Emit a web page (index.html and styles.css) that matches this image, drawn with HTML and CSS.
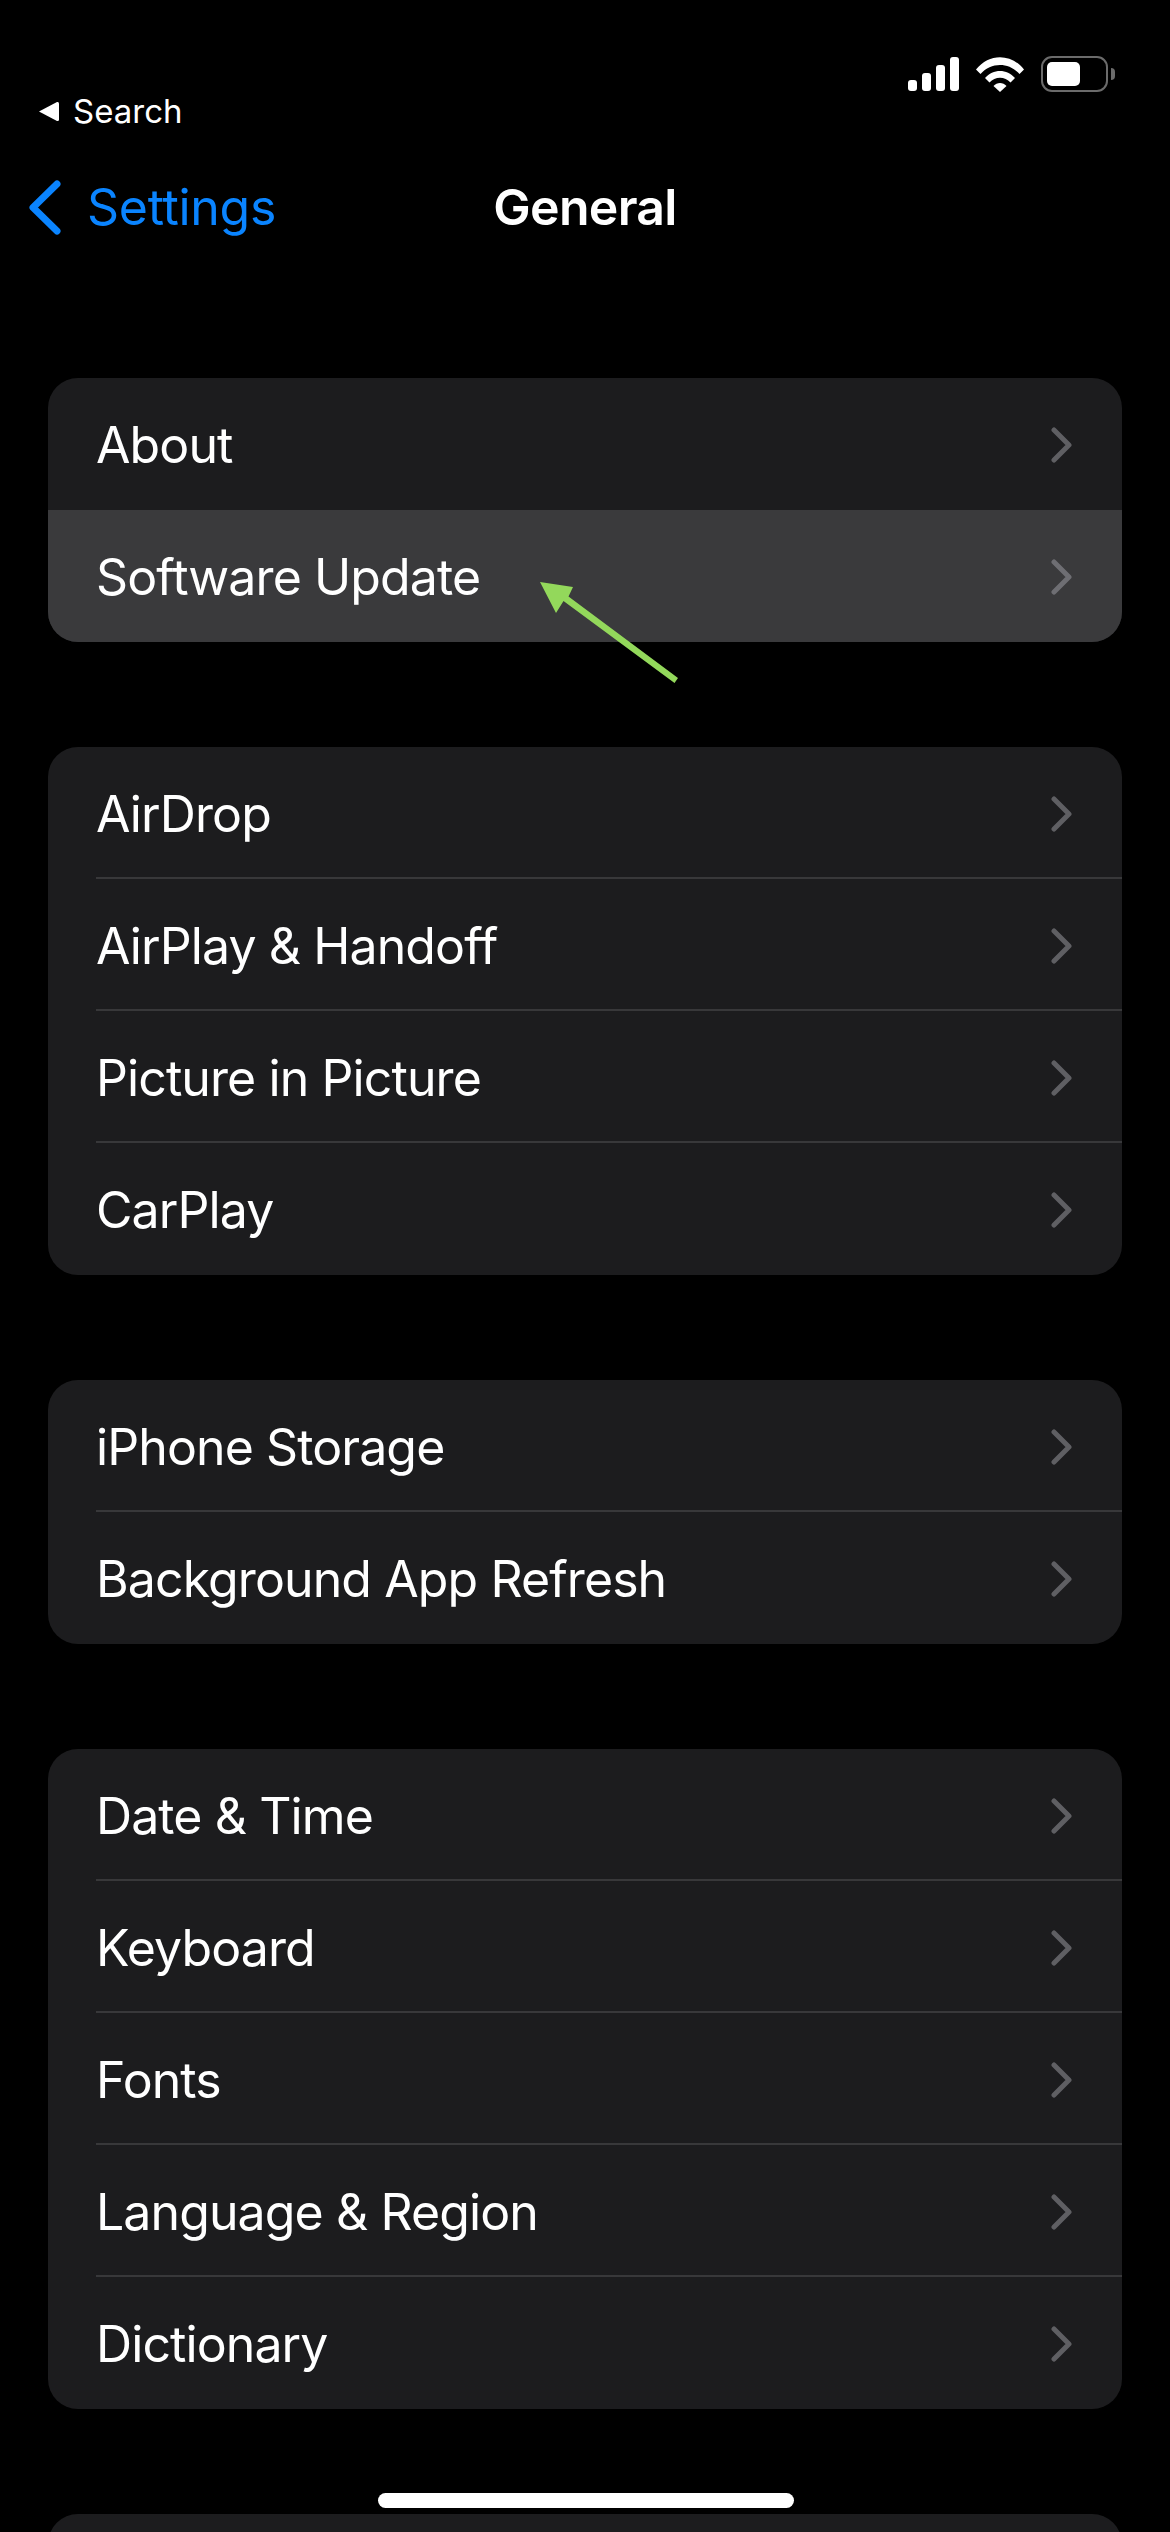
FILE: index.html
```html
<!DOCTYPE html>
<html lang="en">
<head>
    <meta charset="UTF-8">
    <meta name="viewport" content="width=device-width, initial-scale=1.0">
    <title>General</title>
    <link rel="stylesheet" href="styles.css">
</head>

<body>
    <svg class="defs" width="0" height="0">
        <symbol id="chev" viewBox="0 0 21 36">
            <path d="M3 3 L18 18 L3 33" fill="none" stroke="currentColor" stroke-width="5" stroke-linecap="round" stroke-linejoin="round"/>
        </symbol>
    </svg>

    <header class="status-bar">
        <div class="breadcrumb">
            <svg class="breadcrumb-arrow" width="21" height="21" viewBox="0 0 21 21">
                <path d="M1 10.5 L19 1 Q21 0.5 21 2.5 L21 18.5 Q21 20.5 19 20 Z" fill="#fff"/>
            </svg>
            <span>Search</span>
        </div>
        <div class="status-icons">
            <svg width="51" height="34" viewBox="0 0 51 34">
                <rect x="0" y="23" width="9" height="11" rx="3" fill="#fff"/>
                <rect x="14" y="16" width="9" height="18" rx="3" fill="#fff"/>
                <rect x="28" y="8" width="9" height="26" rx="3" fill="#fff"/>
                <rect x="42" y="0" width="9" height="34" rx="3" fill="#fff"/>
            </svg>
            <svg width="48" height="35" viewBox="0 0 48 35">
                <path d="M0 12.5 C13 -4 35 -4 48 12.5 L43.5 17 C33 5 15 5 4.5 17 Z" fill="#fff"/>
                <path d="M9 21 C17 11.5 31 11.5 39 21 L34.5 25.5 C29 19 19 19 13.5 25.5 Z" fill="#fff"/>
                <path d="M17.5 29 C21 25 27 25 30.5 29 L24 35 Z" fill="#fff"/>
            </svg>
            <div class="battery">
                <div class="battery-body"><div class="battery-fill"></div></div>
                <div class="battery-nub"></div>
            </div>
        </div>
    </header>

    <nav class="nav-bar">
        <a class="back-link">
            <svg width="33" height="55" viewBox="0 0 33 55">
                <path d="M29 4 L5 27.5 L29 51" fill="none" stroke="#0a84ff" stroke-width="7" stroke-linecap="round" stroke-linejoin="round"/>
            </svg>
            <span>Settings</span>
        </a>
        <div class="nav-title">General</div>
    </nav>

    <main class="groups">
        <section class="group">
            <div class="row"><span>About</span><svg class="chevron"><use href="#chev"/></svg></div>
            <div class="row row-active"><span>Software Update</span><svg class="chevron"><use href="#chev"/></svg></div>
        </section>
        <section class="group">
            <div class="row"><span>AirDrop</span><svg class="chevron"><use href="#chev"/></svg></div>
            <div class="row"><span>AirPlay &amp; Handoff</span><svg class="chevron"><use href="#chev"/></svg></div>
            <div class="row"><span>Picture in Picture</span><svg class="chevron"><use href="#chev"/></svg></div>
            <div class="row"><span>CarPlay</span><svg class="chevron"><use href="#chev"/></svg></div>
        </section>
        <section class="group">
            <div class="row"><span>iPhone Storage</span><svg class="chevron"><use href="#chev"/></svg></div>
            <div class="row"><span>Background App Refresh</span><svg class="chevron"><use href="#chev"/></svg></div>
        </section>
        <section class="group">
            <div class="row"><span>Date &amp; Time</span><svg class="chevron"><use href="#chev"/></svg></div>
            <div class="row"><span>Keyboard</span><svg class="chevron"><use href="#chev"/></svg></div>
            <div class="row"><span>Fonts</span><svg class="chevron"><use href="#chev"/></svg></div>
            <div class="row"><span>Language &amp; Region</span><svg class="chevron"><use href="#chev"/></svg></div>
            <div class="row"><span>Dictionary</span><svg class="chevron"><use href="#chev"/></svg></div>
        </section>
        <section class="group">
            <div class="row"></div>
        </section>
    </main>

    <!-- green annotation arrow on top of the list -->
    <svg class="callout" width="150" height="110" viewBox="0 0 150 110">
        <path d="M0 1 L33 6 L28.5 15.5 L138 97 L134.5 102 L23.5 20 L16 32 Z" fill="#93d85b"/>
    </svg>

    <div class="home-indicator"></div>
</body>
</html>
```

FILE: styles.css
```css
* {
    box-sizing: border-box;
}

html, body {
    margin: 0;
    height: 2532px;
    overflow: hidden;
}

body {
    position: relative;
    background-color: #000;
    color: #fff;
    font-family: 'Inter', 'Noto Sans', sans-serif;
}

.defs {
    display: block;
    height: 0;
}

.status-bar {
    display: flex;
    justify-content: space-between;
    align-items: flex-start;
    height: 141px;
    padding: 56px 55px 0 38px;
}

.breadcrumb {
    display: flex;
    align-items: center;
    gap: 14px;
    margin-top: 35px;
    font-size: 33px;
    line-height: 40px;
}

.status-icons {
    display: flex;
    align-items: center;
    gap: 17px;
}

.battery {
    display: flex;
    align-items: center;
    gap: 3px;
}

.battery-body {
    width: 67px;
    height: 36px;
    padding: 4px;
    border: 2px solid #6b6b6b;
    border-radius: 11px;
}

.battery-fill {
    width: 33px;
    height: 24px;
    background-color: #fff;
    border-radius: 5px;
}

.battery-nub {
    width: 4px;
    height: 12px;
    background-color: #6b6b6b;
    border-radius: 0 6px 6px 0;
}

.nav-bar {
    display: grid;
    grid-template-columns: 1fr auto 1fr;
    align-items: center;
    height: 132px;
    margin-bottom: 105px;
    padding-left: 28px;
}

.back-link {
    display: flex;
    align-items: center;
    gap: 26px;
    color: #0a84ff;
    font-size: 50px;
    letter-spacing: -0.3px;
}

.nav-title {
    margin-left: -28px;
    font-size: 50px;
    font-weight: 600;
    letter-spacing: -0.7px;
}

.groups {
    display: flex;
    flex-direction: column;
    gap: 105px;
    padding: 0 48px;
}

.group {
    background-color: #1c1c1e;
    border-radius: 30px;
    overflow: hidden;
}

.row {
    position: relative;
    display: flex;
    align-items: center;
    justify-content: space-between;
    height: 132px;
    padding: 2px 50px 0 48px;
    font-size: 50px;
    letter-spacing: -0.9px;
}

.row + .row::before {
    content: "";
    position: absolute;
    top: -2px;
    left: 48px;
    right: 0;
    height: 2px;
    background-color: #38383a;
}

.row-active {
    background-color: #3a3a3c;
}

.row-active::before {
    display: none;
}

.chevron {
    width: 21px;
    height: 36px;
    color: #5f5f63;
}

.row-active .chevron {
    color: #6e6e73;
}

.callout {
    position: absolute;
    top: 581px;
    left: 540px;
}

.home-indicator {
    position: absolute;
    top: 2493px;
    left: 378px;
    width: 416px;
    height: 15px;
    background-color: #fff;
    border-radius: 8px;
}
```
